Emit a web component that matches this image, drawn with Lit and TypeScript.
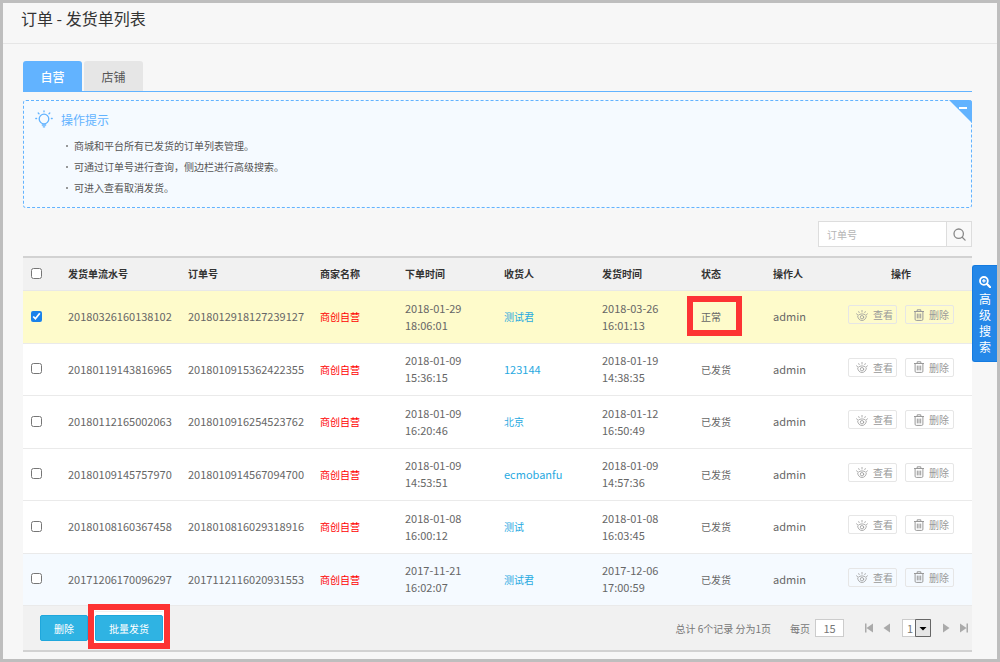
import { LitElement, html, css, svg } from "lit";
import { customElement, state } from "lit/decorators.js";

interface Delivery {
  sn: string;
  order: string;
  placed: [string, string];
  consignee: string;
  shipped: [string, string];
  status: string;
  marked?: boolean;
}

const ROWS: Delivery[] = [
  { sn: "20180326160138102", order: "2018012918127239127", placed: ["2018-01-29", "18:06:01"], consignee: "测试君", shipped: ["2018-03-26", "16:01:13"], status: "正常", marked: true },
  { sn: "20180119143816965", order: "2018010915362422355", placed: ["2018-01-09", "15:36:15"], consignee: "123144", shipped: ["2018-01-19", "14:38:35"], status: "已发货" },
  { sn: "20180112165002063", order: "2018010916254523762", placed: ["2018-01-09", "16:20:46"], consignee: "北京", shipped: ["2018-01-12", "16:50:49"], status: "已发货" },
  { sn: "20180109145757970", order: "2018010914567094700", placed: ["2018-01-09", "14:53:51"], consignee: "ecmobanfu", shipped: ["2018-01-09", "14:57:36"], status: "已发货" },
  { sn: "20180108160367458", order: "2018010816029318916", placed: ["2018-01-08", "16:00:12"], consignee: "测试", shipped: ["2018-01-08", "16:03:45"], status: "已发货" },
  { sn: "20171206170096297", order: "2017112116020931553", placed: ["2017-11-21", "16:02:07"], consignee: "测试君", shipped: ["2017-12-06", "17:00:59"], status: "已发货" },
];

const TIPS = [
  "商城和平台所有已发货的订单列表管理。",
  "可通过订单号进行查询，侧边栏进行高级搜索。",
  "可进入查看取消发货。",
];

const bulb = html`<svg class="bulb" width="18" height="18" viewBox="0 0 18 18" fill="none" stroke="currentColor" stroke-width="1.3" stroke-linecap="round">
  <circle cx="9" cy="9" r="4.800" />
  <path d="M7.300 15h3.400M8.300 16.800h1.400M9 .8v1M3.200 3l.8.8M14.800 3l-.8.8M.8 8.500h.8M16.400 8.500h.8" />
</svg>`;

const eye = html`<svg width="12" height="12" viewBox="0 0 12 12" fill="none" stroke="currentColor" stroke-width="0.8" stroke-linecap="round">
  <path d="M.5 4.800l1.700 1.500C3.200 5.400 4.500 4.900 6 4.900s2.800.5 3.800 1.400l1.700-1.500M1.600 7.200C2 9.800 3.800 11.500 6 11.500s4-1.700 4.400-4.300" />
  <circle cx="6" cy="8.200" r="1.700" />
  <path d="M6 3V1.400M3.200 3.600l-.5-1M8.800 3.600l.5-1" />
</svg>`;

const trash = html`<svg width="10" height="12" viewBox="0 0 10 12" fill="none" stroke="currentColor" stroke-width="1">
  <path d="M0 2.500h10M3.200 2.300V.8h3.600v1.500M1.100 2.800v7.400q0 1.200 1.200 1.200h5.400q1.200 0 1.200-1.200V2.800M3.300 4.600v4.800M5 4.600v4.800M6.700 4.600v4.800" />
</svg>`;

const searchIcon = html`<svg width="13" height="13" viewBox="0 0 13 13" fill="none" stroke="currentColor" stroke-width="1.300" stroke-linecap="round">
  <circle cx="5.700" cy="5.700" r="4.700" /><path d="M9.200 9.200l2.900 2.900" />
</svg>`;

const zoomIn = html`<svg width="12" height="12" viewBox="0 0 12 12" fill="none" stroke="currentColor">
  <circle cx="4.900" cy="4.900" r="3.900" stroke-width="1.800" /><path d="M8 8l3.200 3.200" stroke-width="2.200" stroke-linecap="round" />
  <path d="M4.900 3.100v3.600M3.100 4.900h3.600" stroke-width="1.100" />
</svg>`;

const pagerIcon = (shape: unknown) =>
  html`<svg width="10" height="10" viewBox="0 0 10 10" fill="currentColor">${shape}</svg>`;

@customElement("app-root")
export class AppRoot extends LitElement {
  static styles = css`
    :host {
      display: block;
      box-sizing: border-box;
      position: relative;
      min-height: 100vh;
      border: 3px solid #bebebe;
      background: #f7f7f7;
      color: #666;
      font: 10px/17px "Noto Sans CJK SC", "Noto Sans", sans-serif;
    }
    *, *::before, *::after { box-sizing: border-box; }
    button, input, select { font: inherit; color: inherit; margin: 0; }
    button { cursor: pointer; padding: 0; }
    svg { display: block; flex: none; }
    a { text-decoration: none; }

    .title {
      margin: 0;
      height: 41px;
      padding: 0 18px;
      border-bottom: 1px solid #e6e6e6;
      font-size: 16px;
      line-height: 30px;
      font-weight: 400;
      color: #333;
    }
    .content { padding: 17px 25px 0 20px; }

    .tabs { display: flex; gap: 2px; border-bottom: 1px solid #62b3ff; }
    .tab {
      width: 59px;
      height: 30px;
      border: 0;
      border-radius: 3px 3px 0 0;
      background: #e6e6e6;
      color: #555;
      font-size: 12px;
    }
    .tab.on { background: #62b3ff; color: #fff; font-weight: 500; }

    .tips {
      position: relative;
      margin-top: 8px;
      height: 108px;
      padding: 9px 11px;
      border: 1px dashed #62b3ff;
      border-radius: 3px;
      background: #f5faff;
    }
    .tips-head {
      display: flex;
      align-items: center;
      gap: 8px;
      margin: 0;
      height: 18px;
      font-size: 12px;
      font-weight: 400;
      color: #62b3ff;
    }
    .tips ul { margin: 7px 0 0; padding: 0 0 0 31px; list-style: none; }
    .tips li { display: flex; align-items: center; gap: 6px; line-height: 21px; color: #555; }
    .tips li::before { content: ""; width: 2px; height: 2px; background: #777; border-radius: 1px; }
    .fold {
      position: absolute;
      top: -1px;
      right: -1px;
      border: 0;
      background: none;
    }

    .search { display: flex; justify-content: flex-end; margin-top: 13px; }
    .search input {
      width: 128px;
      height: 26px;
      padding: 0 8px;
      border: 1px solid #ddd;
      border-right: 0;
      background: #fff;
      outline: 0;
    }
    .search input::placeholder { color: #b5b5b5; }
    .search button {
      width: 26px;
      height: 26px;
      display: grid;
      place-items: center;
      border: 1px solid #ddd;
      background: #f9f9f9;
      color: #888;
    }

    .list { width: 100%; margin-top: 9px; table-layout: fixed; border-collapse: separate; border-spacing: 0; border-top: 2px solid #d2d2d2; }
    .list th { height: 33px; padding: 0 0 2px; background: #f1f1f1; text-align: left; font-weight: 700; color: #333; border-bottom: 1px solid #e8e8e8; }
    .list td { height: 53px; padding: 0 0 1px; background: #fff; border-bottom: 1px solid #eaeaea; }
    .list tbody tr:nth-child(even) td { height: 52px; }
    .list tr.picked td { background: #fefbcb; }
    .list tr.hover td { background: #f5faff; }
    .list .pick { padding: 0 0 2px 8px; }
    .pick input { display: block; width: 11px; height: 11px; accent-color: #1a82ea; }
    .c-pick { width: 45px; }
    .c-sn { width: 120px; }
    .c-order { width: 132px; }
    .c-shop { width: 85px; }
    .c-placed { width: 99px; }
    .c-name { width: 98px; }
    .c-shipped { width: 99px; }
    .c-status { width: 72px; }
    .c-user { width: 57px; }
    .c-act { width: 142px; }
    .list th.center { text-align: center; }
    .latin { font-size: 11px; }
    .shop { color: #f00; }
    .name { color: #28a9df; }
    .marked { position: relative; }
    .marked::after { content: ""; position: absolute; inset: -13px -21px -12px -14px; border: 6px solid #fd3333; pointer-events: none; }
    .acts { display: flex; justify-content: center; gap: 8px; padding-bottom: 4px; }
    .act {
      display: flex;
      align-items: center;
      justify-content: center;
      gap: 5px;
      width: 49px;
      height: 19px;
      padding-left: 4px;
      border: 1px solid #e6e6e6;
      border-radius: 2px;
      background: transparent;
      color: #999;
    }

    .foot {
      display: flex;
      align-items: center;
      justify-content: space-between;
      height: 46px;
      padding: 0 3px 0 17px;
      background: #f1f1f1;
      border-bottom: 2px solid #d2d2d2;
    }
    .bulk { display: flex; gap: 7px; }
    .bulk button {
      height: 26px;
      padding: 0 13px;
      border: 1px solid #1fa7dc;
      border-radius: 2px;
      background: #2fb3e3;
      color: #fff;
    }
    .bulk .marked { box-shadow: 0 0 0 3px #fff; }
    .bulk .marked::after { inset: -12px -8px -9px -8px; box-shadow: inset 0 0 0 1px #fff; }
    .pager { display: flex; align-items: center; color: #777; }
    .per { display: flex; align-items: center; gap: 5px; margin: 0 20px 0 19px; }
    .per input { width: 29px; height: 18px; padding: 0; border: 1px solid #ccc; background: #fff; text-align: center; font-size: 11px; }
    .go { border: 0; background: none; color: #aaa; }
    .nav { display: flex; align-items: center; gap: 8px; }
    .page { position: relative; display: flex; margin: 0 2px; }
    .page select {
      appearance: none;
      width: 29px;
      height: 18px;
      padding: 0 0 0 4px;
      border: 1px solid #ccc;
      border-radius: 0;
      background: #fff;
      font-size: 11px;
      line-height: 16px;
    }
    .page svg { position: absolute; right: 0; top: 0; pointer-events: none; }

    .advanced {
      position: absolute;
      right: 0;
      top: 262px;
      width: 25px;
      display: flex;
      flex-direction: column;
      align-items: center;
      gap: 3px;
      padding: 10px 0 6px;
      border: 1px solid #147be0;
      border-right: 0;
      border-radius: 3px 0 0 3px;
      background: #2487e8;
      color: #fff;
      font-size: 12px;
      line-height: 16px;
    }
    .advanced span { width: 12px; }
  `;

  @state() private picked = new Set<number>([0]);

  private toggle(i: number) {
    const next = new Set(this.picked);
    next.has(i) ? next.delete(i) : next.add(i);
    this.picked = next;
  }

  private row(r: Delivery, i: number) {
    const cls = this.picked.has(i) ? "picked" : i === ROWS.length - 1 ? "hover" : "";
    return html`<tr class=${cls}>
      <td class="pick"><input type="checkbox" aria-label=${r.sn} .checked=${this.picked.has(i)} @change=${() => this.toggle(i)} /></td>
      <td class="latin">${r.sn}</td>
      <td class="latin">${r.order}</td>
      <td class="shop">商创自营</td>
      <td class="latin">${r.placed[0]}<br />${r.placed[1]}</td>
      <td class=${/^\w+$/.test(r.consignee) ? "latin" : ""}><a class="name" href="#">${r.consignee}</a></td>
      <td class="latin">${r.shipped[0]}<br />${r.shipped[1]}</td>
      <td><span class=${r.marked ? "marked" : ""}>${r.status}</span></td>
      <td class="latin">admin</td>
      <td><div class="acts">
        <button class="act">${eye}查看</button>
        <button class="act">${trash}删除</button>
      </div></td>
    </tr>`;
  }

  render() {
    return html`
      <h1 class="title">订单 - 发货单列表</h1>
      <main class="content">
        <nav class="tabs">
          <button class="tab on">自营</button>
          <button class="tab">店铺</button>
        </nav>
        <section class="tips">
          <h2 class="tips-head">${bulb}操作提示</h2>
          <ul>${TIPS.map((t) => html`<li>${t}</li>`)}</ul>
          <button class="fold" aria-label="收起">
            <svg width="23" height="23" viewBox="0 0 23 23"><path d="M0 0h20q3 0 3 3v20z" fill="#62b3ff" /><path d="M10 8h8" stroke="#fff" stroke-width="2" /></svg>
          </button>
        </section>
        <form class="search" @submit=${(e: Event) => e.preventDefault()}>
          <input type="text" placeholder="订单号" aria-label="订单号" />
          <button aria-label="搜索">${searchIcon}</button>
        </form>
        <table class="list">
          <colgroup>
            ${["pick", "sn", "order", "shop", "placed", "name", "shipped", "status", "user", "act"].map((c) => html`<col class="c-${c}" />`)}
          </colgroup>
          <thead>
            <tr>
              <th class="pick"><input type="checkbox" aria-label="全选" /></th>
              <th>发货单流水号</th><th>订单号</th><th>商家名称</th><th>下单时间</th><th>收货人</th>
              <th>发货时间</th><th>状态</th><th>操作人</th><th class="center">操作</th>
            </tr>
          </thead>
          <tbody>${ROWS.map((r, i) => this.row(r, i))}</tbody>
        </table>
        <footer class="foot">
          <div class="bulk">
            <button>删除</button>
            <button class="marked">批量发货</button>
          </div>
          <div class="pager">
            <span>总计 6个记录 分为1页</span>
            <label class="per">每页<input type="text" .value=${"15"} /></label>
            <div class="nav">
              <button class="go" aria-label="首页">${pagerIcon(svg`<path d="M1 .5h1.500v9H1zM9 .5v9L2.500 5z" />`)}</button>
              <button class="go" aria-label="上一页">${pagerIcon(svg`<path d="M8 .5v9L1.500 5z" />`)}</button>
              <div class="page">
                <select aria-label="页码"><option>1</option></select>
                <svg width="16" height="18" viewBox="0 0 16 18"><path d="M.5.5h15v17H.5z" fill="#e6e6e6" stroke="#666" /><path d="M4.500 8h7L8 11.500z" fill="#000" /></svg>
              </div>
              <button class="go" aria-label="下一页">${pagerIcon(svg`<path d="M2 .5v9L8.500 5z" />`)}</button>
              <button class="go" aria-label="末页">${pagerIcon(svg`<path d="M9 .5H7.500v9H9zM1 .5v9L7.500 5z" />`)}</button>
            </div>
          </div>
        </footer>
      </main>
      <button class="advanced">${zoomIn}<span>高级搜索</span></button>
    `;
  }
}
